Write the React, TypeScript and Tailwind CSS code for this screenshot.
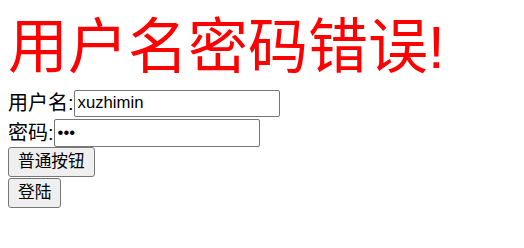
export default function App() {
  return (
    <div className="bg-white min-h-[248px] p-2 text-black font-['Liberation_Sans','Noto_Sans_CJK_SC',sans-serif]">
      <div className="text-[60px] leading-[80px] text-[#ff0000]">用户名密码错误!</div>
      <div className="flex h-[30px] items-center text-[20px]">
        <span>用户名:</span>
        <input
          defaultValue="xuzhimin"
          className="h-[27px] w-[206px] rounded-[2px] border border-[#767676] px-[3px] text-[16.7px] outline-none"
        />
      </div>
      <div className="flex h-[29px] items-center text-[20px]">
        <span>密码:</span>
        <input
          type="password"
          defaultValue="abc"
          className="h-[28px] w-[206px] rounded-[2px] border border-[#767676] px-[3px] text-[16.7px] outline-none"
        />
      </div>
      <div className="flex flex-col items-start">
        <button className="h-[30px] rounded-[3px] border border-[#767676] bg-[#efefef] px-[9px] text-[16.7px] leading-[20px]">
          普通按钮
        </button>
        <button className="mt-[1px] h-[30px] rounded-[3px] border border-[#767676] bg-[#efefef] px-[9px] text-[16.7px] leading-[20px]">
          登陆
        </button>
      </div>
    </div>
  );
}
